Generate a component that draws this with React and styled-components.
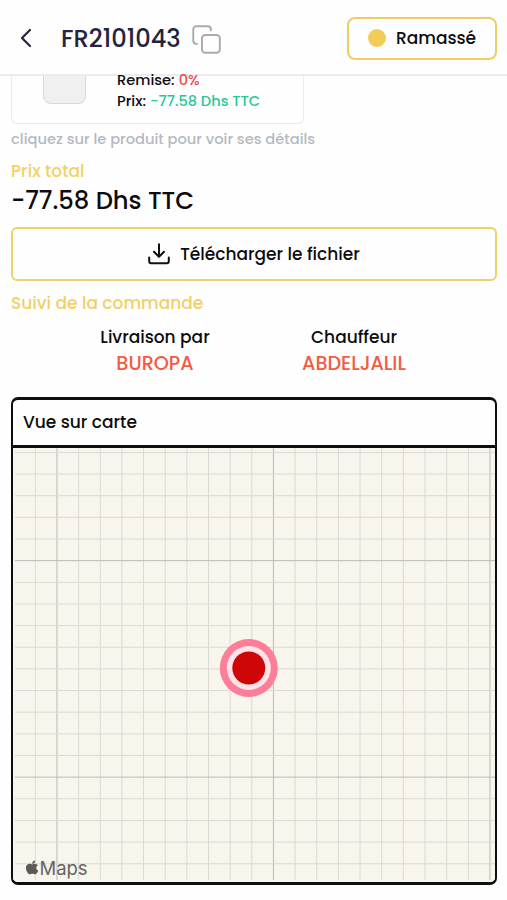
import React from 'react';
import styled, { createGlobalStyle } from 'styled-components';

const GlobalStyle = createGlobalStyle`
  * {
    box-sizing: border-box;
  }

  body {
    margin: 0;
    background: #fff;
    color: #0c0c0e;
    font-family: Poppins, Inter, sans-serif;
    font-weight: 500;
  }
`;

const Screen = styled.div`
  width: 507px;
  height: 900px;
  overflow: hidden;
  background: #fefefe;
`;

const Text = styled.span`
  display: block;
  width: fit-content;
  white-space: nowrap;
  color: ${(props) => props.$color || 'inherit'};
  font-size: ${(props) => props.$size || 17}px;
  line-height: ${(props) => props.$line || 24}px;
`;

const Header = styled.header`
  display: flex;
  align-items: center;
  height: 76px;
  padding: 2px 10px 0 20px;
  border-bottom: 2px solid #ececed;
`;

const BackIcon = styled.svg`
  width: 12px;
  height: 20px;
  margin-right: 29px;
`;

const OrderNumber = styled(Text)`
  padding-top: 2px;
`;

const CopyIcon = styled.svg`
  width: 29px;
  height: 29px;
  margin-top: 2px;
  margin-left: 11px;
`;

const Status = styled.div`
  display: flex;
  align-items: center;
  gap: 10px;
  width: 150px;
  height: 43px;
  margin-left: auto;
  padding-left: 19px;
  border: 2px solid #f1cd61;
  border-radius: 8px;
`;

const Dot = styled.span`
  width: 18px;
  height: 18px;
  border-radius: 50%;
  background: #f1cd58;
`;

const Content = styled.main`
  padding: 0 10px 0 11px;
`;

const Product = styled.div`
  display: flex;
  width: 293px;
  height: 48px;
  padding-left: 31px;
  border: 1px solid #e9ebed;
  border-top: none;
  border-radius: 0 0 6px 6px;
`;

const Thumb = styled.div`
  width: 43px;
  height: 28px;
  margin-right: 31px;
  border: 1px solid #d9d9da;
  border-top: none;
  border-radius: 0 0 8px 8px;
  background: #f0f0f0;
`;

const Details = styled.div`
  display: flex;
  flex-direction: column;
  margin-top: -6px;
`;

const DetailRow = styled.div`
  display: flex;
  gap: 4px;
  height: 21px;
`;

const Download = styled.button`
  display: flex;
  align-items: center;
  justify-content: center;
  gap: 10px;
  width: 100%;
  height: 54px;
  margin: 13px 0 10px;
  padding: 0;
  border: 2px solid #f0d068;
  border-radius: 6px;
  background: transparent;
  color: inherit;
  font-family: inherit;
  font-weight: 500;
`;

const Tracking = styled.div`
  display: grid;
  grid-template-columns: 199px 199px;
  justify-content: center;
  margin-top: 9px;
  padding-left: 1px;
`;

const Contact = styled.div`
  display: flex;
  flex-direction: column;
  align-items: center;
`;

const MapCard = styled.section`
  height: 488px;
  margin-top: 20px;
  border: solid #0d0e0d;
  border-width: 3px 2px;
  border-radius: 7px;
  overflow: hidden;
`;

const MapTitle = styled.div`
  display: flex;
  align-items: center;
  height: 48px;
  padding: 0 0 1px 10px;
  border-bottom: 3px solid #0d0e0d;
`;

const MapCanvas = styled.svg`
  display: block;
  width: 482px;
  height: 434px;
  background: #f8f5ed;
`;

const STEP = 21.65;
const columns = Array.from({ length: 22 }, (_, i) => 22.3 + i * STEP);
const rows = Array.from({ length: 20 }, (_, i) => 4.4 + i * STEP);

const lineColor = (major) => (major ? '#bcbab4' : '#dcd9d3');

const MapGrid = () => (
  <MapCanvas viewBox="0 0 482 434">
    {columns.map((x, i) => (
      <line key={x} x1={x} x2={x} y1="0" y2="432" stroke={lineColor(i % 10 === 1)} />
    ))}
    {rows.map((y, i) => (
      <line key={y} x1="2" x2="482" y1={y} y2={y} stroke={lineColor(i % 10 === 5)} />
    ))}
    <circle cx="235.8" cy="220" r="29" fill="#fc7e98" />
    <circle cx="235.8" cy="220" r="22" fill="#fee3e8" />
    <circle cx="235.8" cy="220" r="16.5" fill="#cf0607" />
    <g transform="translate(12.8 411.4) scale(.0328 .0312)" fill="#5e5b57">
      <path d="M318.7 268.7c-.2-36.7 16.4-64.4 50-84.8-18.8-26.9-47.2-41.7-84.7-44.6-35.5-2.8-74.3 20.7-88.5 20.7-15 0-49.4-19.7-76.4-19.7C63.3 141.2 4 184.8 4 273.5q0 39.3 14.4 81.2c12.8 36.7 59 126.7 107.2 125.2 25.2-.6 43-17.9 75.8-17.9 31.8 0 48.3 17.9 76.4 17.9 48.6-.7 90.4-82.5 102.6-119.3-65.2-30.7-61.7-90-61.7-91.9zm-56.6-164.2c27.3-32.4 24.8-61.9 24-72.5-24.1 1.4-52 16.4-67.9 34.9-17.5 19.8-27.8 44.3-25.6 71.9 26.1 2 49.9-11.4 69.5-34.3z" />
    </g>
    <text
      x="26.5"
      y="427"
      fill="#66635f"
      fontFamily="Inter, sans-serif"
      fontSize="18.5"
      fontWeight="400"
      textLength="48"
    >
      Maps
    </text>
  </MapCanvas>
);

const OrderPage = () => (
  <Screen>
    <GlobalStyle />
    <Header>
      <BackIcon viewBox="0 0 12 20" fill="none" stroke="#242440" strokeWidth="2.2" strokeLinecap="round" strokeLinejoin="round">
        <path d="M10 2 2 10l8 8" />
      </BackIcon>
      <OrderNumber $size={24.2} $line={36} $color="#25243c">FR2101043</OrderNumber>
      <CopyIcon viewBox="0 0 30 30" fill="none" stroke="#a8abad" strokeWidth="2" strokeLinecap="round" strokeLinejoin="round">
        <path d="M5.3 19.5H4.5A3.2 3.2 0 0 1 1.3 16.3V4.5A3.2 3.2 0 0 1 4.5 1.3h11.8a3.2 3.2 0 0 1 3.2 3.2v1" />
        <rect x="10.3" y="10.3" width="18.5" height="18.5" rx="3.5" />
      </CopyIcon>
      <Status>
        <Dot />
        <Text>Ramassé</Text>
      </Status>
    </Header>

    <Content>
      <Product>
        <Thumb />
        <Details>
          <DetailRow>
            <Text $size={14.6} $line={21}>Remise:</Text>
            <Text $size={14.6} $line={21} $color="#ee4b4d">0%</Text>
          </DetailRow>
          <DetailRow>
            <Text $size={14.6} $line={21}>Prix:</Text>
            <Text $size={14.6} $line={21} $color="#28c796">-77.58 Dhs TTC</Text>
          </DetailRow>
        </Details>
      </Product>
      <Text $size={14.65} $line={30} $color="#b4b9c0">cliquez sur le produit pour voir ses détails</Text>
      <Text $line={34} $color="#f4d065">Prix total</Text>
      <Text $size={24.3} $line={26}>-77.58 Dhs TTC</Text>

      <Download>
        <svg width="22" height="22" viewBox="0 0 22 22" fill="none" stroke="#101012" strokeWidth="2" strokeLinecap="round" strokeLinejoin="round">
          <path d="M11 1.2v12.3M6 8.8l5 5 5-5M1.2 14.5v3.8a2 2 0 0 0 2 2h15.6a2 2 0 0 0 2-2v-3.8" />
        </svg>
        <Text>Télécharger le fichier</Text>
      </Download>

      <Text $color="#f1d067">Suivi de la commande</Text>
      <Tracking>
        <Contact>
          <Text $line={27}>Livraison par</Text>
          <Text $size={19.2} $line={26} $color="#f45b42">BUROPA</Text>
        </Contact>
        <Contact>
          <Text $line={27}>Chauffeur</Text>
          <Text $size={19.2} $line={26} $color="#f45b42">ABDELJALIL</Text>
        </Contact>
      </Tracking>

      <MapCard>
        <MapTitle>
          <Text>Vue sur carte</Text>
        </MapTitle>
        <MapGrid />
      </MapCard>
    </Content>
  </Screen>
);

export default OrderPage;
